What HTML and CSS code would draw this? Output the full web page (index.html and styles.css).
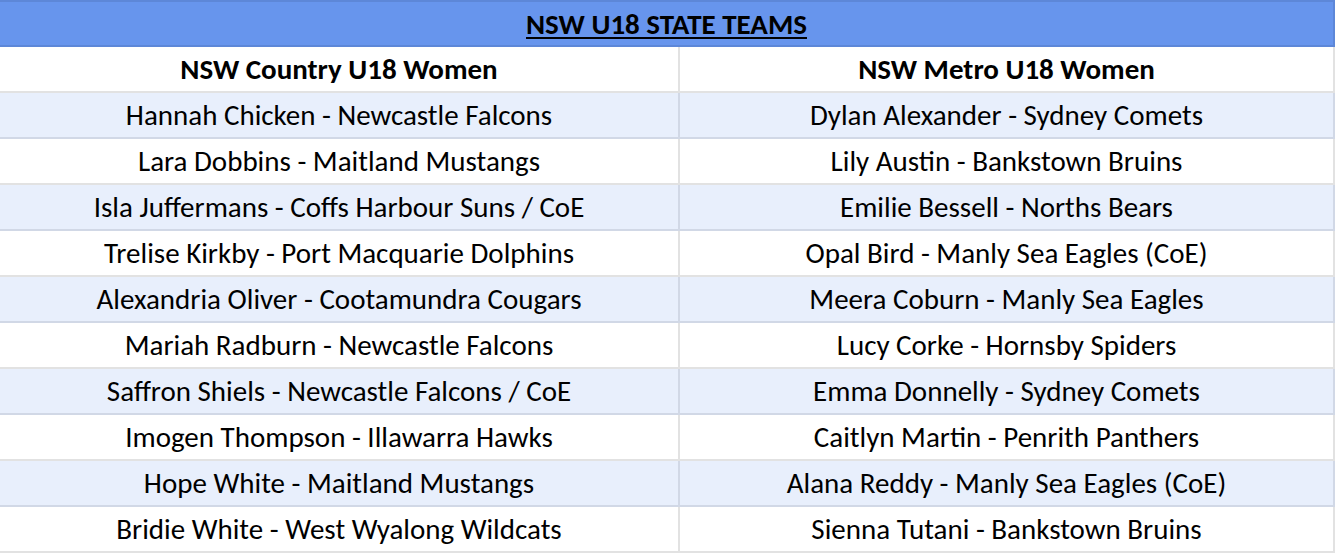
FILE: index.html
```html
<!DOCTYPE html>
<html>
<head>
<meta charset="utf-8">
<link rel="stylesheet" href="styles.css">
</head>
<body>
<table class="teams">
  <colgroup><col class="c1"><col class="c2"></colgroup>
  <thead>
    <tr class="title-row"><th colspan="2"><span class="title">NSW U18 STATE TEAMS</span></th></tr>
    <tr class="head-row"><th>NSW Country U18 Women</th><th>NSW Metro U18 Women</th></tr>
  </thead>
  <tbody>
    <tr class="alt"><td>Hannah Chicken - Newcastle Falcons</td><td>Dylan Alexander - Sydney Comets</td></tr>
    <tr><td>Lara Dobbins - Maitland Mustangs</td><td>Lily Austin - Bankstown Bruins</td></tr>
    <tr class="alt"><td>Isla Juffermans - Coffs Harbour Suns / CoE</td><td>Emilie Bessell - Norths Bears</td></tr>
    <tr><td>Trelise Kirkby - Port Macquarie Dolphins</td><td>Opal Bird - Manly Sea Eagles (CoE)</td></tr>
    <tr class="alt"><td>Alexandria Oliver - Cootamundra Cougars</td><td>Meera Coburn - Manly Sea Eagles</td></tr>
    <tr><td>Mariah Radburn - Newcastle Falcons</td><td>Lucy Corke - Hornsby Spiders</td></tr>
    <tr class="alt"><td>Saffron Shiels - Newcastle Falcons / CoE</td><td>Emma Donnelly - Sydney Comets</td></tr>
    <tr><td>Imogen Thompson - Illawarra Hawks</td><td>Caitlyn Martin - Penrith Panthers</td></tr>
    <tr class="alt"><td>Hope White - Maitland Mustangs</td><td>Alana Reddy - Manly Sea Eagles (CoE)</td></tr>
    <tr><td>Bridie White - West Wyalong Wildcats</td><td>Sienna Tutani - Bankstown Bruins</td></tr>
  </tbody>
</table>
</body>
</html>
```

FILE: styles.css
```css
html, body {
  margin: 0;
  padding: 0;
  background: #ffffff;
}

.teams {
  border-collapse: collapse;
  table-layout: fixed;
  width: 1334px;
  font-family: Carlito, "Open Sans", "Noto Sans", sans-serif;
  font-size: 29px;
  color: #000000;
}

.c1 { width: 679px; }
.c2 { width: 655px; }

.teams th,
.teams td {
  height: 43px;
  padding: 1px 4px 0;
  text-align: center;
  vertical-align: middle;
  white-space: nowrap;
  line-height: 43px;
  border: 2px solid #e2e2e2;
  border-left: none;
}

.title-row th {
  background: #6795ed;
  border-top: 2px solid #5d87d8;
  border-bottom: 2px solid #5d87d8;
  border-right: 2px solid #5d87d8;
  height: 42px;
  line-height: 42px;
}

.title {
  font-weight: bold;
  text-decoration: underline;
  text-underline-offset: 3px;
  text-decoration-thickness: 2px;
}

.head-row th {
  font-weight: bold;
  background: #ffffff;
}

.teams tr.alt td {
  background: #e8effc;
  border-color: #d1d8e6;
}
```
